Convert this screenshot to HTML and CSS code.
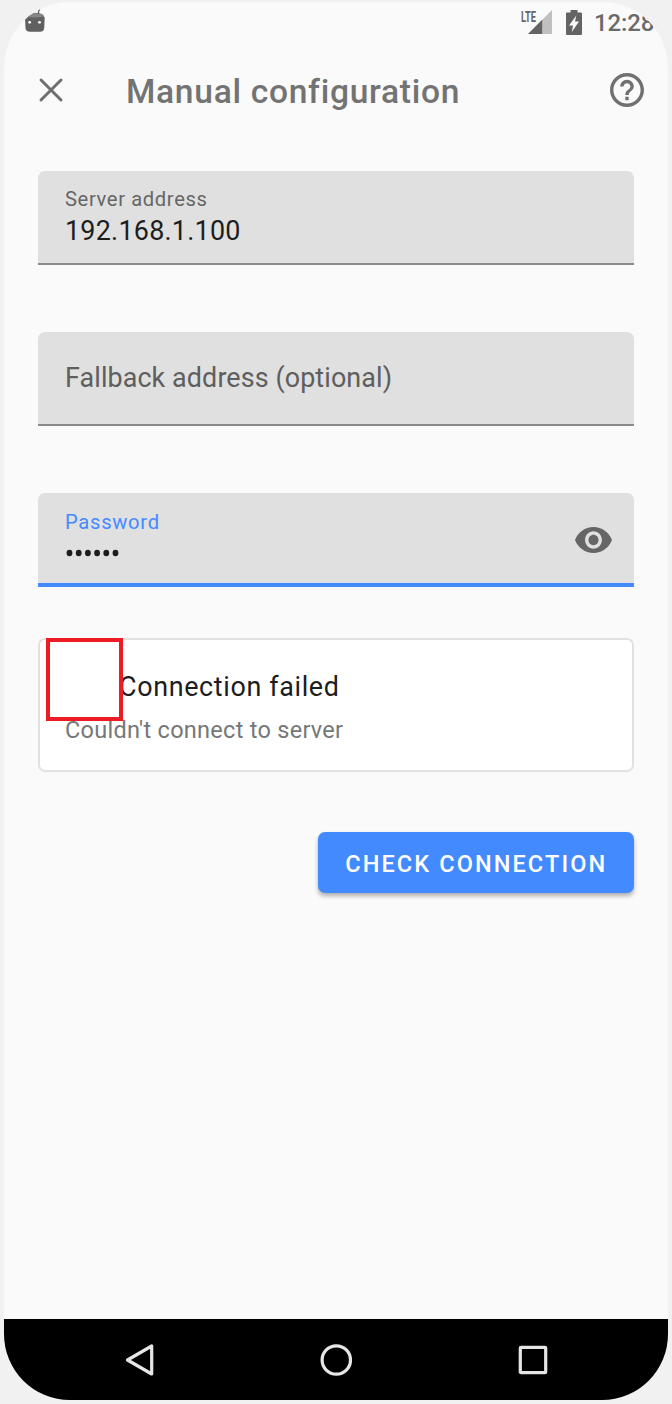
FILE: index.html
```html
<!DOCTYPE html>
<html lang="en">
<head>
<meta charset="utf-8">
<title>Manual configuration</title>
<link rel="stylesheet" href="styles.css">
</head>
<body>
<div class="device">
  <div class="status-bar">
    <svg class="debug-icon" width="22" height="26" viewBox="0 0 22 26">
      <path d="M1 10Q1 8 4 7H17Q20.700 8 20.700 10L20.200 20Q20 23.800 16 23.800H6Q1.800 23.800 1.500 20Z" fill="#606060"/>
      <path d="M1.500 8.500Q3 6.500 7 5.500Q11 4 16 5.300Q19.500 6 20.200 8.200Q11 10.500 1.500 8.500Z" fill="#858585"/>
      <path d="M14.500 6Q14 2.500 16 1.500" fill="none" stroke="#606060" stroke-width="1.300"/>
      <circle cx="5.700" cy="14.300" r="1.400" fill="#fff"/><circle cx="15.500" cy="14.300" r="1.400" fill="#fff"/>
    </svg>
    <div class="signal">
      <span class="lte">LTE</span>
      <svg width="24" height="24" viewBox="0 0 24 24"><path d="M24 0V24H0Z" fill="#c0c0c0"/><path d="M14.200 9.800V24H0Z" fill="#646464"/></svg>
    </div>
    <svg class="battery" width="16" height="25" viewBox="0 0 16 25"><path d="M4.500 0H11.500V2.500H15Q16 2.500 16 3.500V24Q16 25 15 25H1Q0 25 0 24V3.500Q0 2.500 1 2.500H4.500Z" fill="#646464"/><path d="M10.300 5.500L9 11.500H13L5.800 22L7 15.500H3Z" fill="#fafafa"/></svg>
    <span class="clock">12:28</span>
  </div>

  <header class="app-bar">
    <svg class="close" width="26" height="26" viewBox="0 0 26 26"><path d="M3 3L23 23M23 3L3 23" fill="none" stroke="#6e6e6e" stroke-width="3" stroke-linecap="round"/></svg>
    <h1 class="title">Manual configuration</h1>
    <svg class="help" width="34" height="34" viewBox="2 2 20 20"><path fill="#707070" d="M11 18h2v-2h-2v2zm1-16C6.480 2 2 6.480 2 12s4.480 10 10 10 10-4.480 10-10S17.520 2 12 2zm0 18c-4.410 0-8-3.590-8-8s3.590-8 8-8 8 3.590 8 8-3.590 8-8 8zm0-14c-2.210 0-4 1.790-4 4h2c0-1.100.9-2 2-2s2 .9 2 2c0 2-3 1.750-3 5h2c0-2.250 3-2.500 3-5 0-2.210-1.790-4-4-4z"/></svg>
  </header>

  <main class="form">
    <div class="field">
      <span class="label">Server address</span>
      <span class="value">192.168.1.100</span>
    </div>
    <div class="field empty">
      <span class="placeholder">Fallback address (optional)</span>
    </div>
    <div class="field focused">
      <div class="field-text">
        <span class="label">Password</span>
        <svg class="dots" width="56" height="8" viewBox="0 0 56 8" fill="#1d1d1d"><ellipse cx="4.500" cy="4" rx="2.900" ry="3.300"/><ellipse cx="13.700" cy="4" rx="2.900" ry="3.300"/><ellipse cx="22.900" cy="4" rx="2.900" ry="3.300"/><ellipse cx="32.100" cy="4" rx="2.900" ry="3.300"/><ellipse cx="41.300" cy="4" rx="2.900" ry="3.300"/><ellipse cx="50.500" cy="4" rx="2.900" ry="3.300"/></svg>
      </div>
      <svg class="eye" width="37" height="26" viewBox="1 4.500 22 15" preserveAspectRatio="none"><path fill="#666" d="M12 4.500C7 4.500 2.730 7.610 1 12c1.730 4.390 6 7.500 11 7.500s9.270-3.110 11-7.500c-1.730-4.390-6-7.500-11-7.500zM12 17c-2.760 0-5-2.240-5-5s2.240-5 5-5 5 2.240 5 5-2.240 5-5 5zm0-8c-1.660 0-3 1.340-3 3s1.340 3 3 3 3-1.340 3-3-1.340-3-3-3z"/></svg>
    </div>

    <section class="card">
      <h2 class="card-title">Connection failed</h2>
      <p class="card-text">Couldn't connect to server</p>
      <div class="highlight"></div>
    </section>

    <button class="check">CHECK CONNECTION</button>
  </main>

  <nav class="nav-bar">
    <svg width="32" height="36" viewBox="0 0 32 36"><path d="M4.500 18L28.700 4V32Z" fill="none" stroke="#e6e6e6" stroke-width="3.200" stroke-linejoin="round"/></svg>
    <svg width="32" height="36" viewBox="0 0 32 36"><circle cx="16.300" cy="18" r="14.200" fill="none" stroke="#e6e6e6" stroke-width="3.200"/></svg>
    <svg width="32" height="36" viewBox="0 0 32 36"><rect x="3.300" y="5.300" width="25.400" height="25.400" rx=".8" fill="none" stroke="#e6e6e6" stroke-width="3.200"/></svg>
  </nav>
</div>
</body>
</html>
```

FILE: styles.css
```css
* { box-sizing: border-box; }
body {
  margin: 0;
  height: 1404px;
  padding: 2px 4px 4px;
  background: #f1f1f1;
  font-family: Roboto, sans-serif;
  color: #1d1d1d;
}
svg { display: block; flex: none; }
h1, h2, p { margin: 0; }
.device {
  display: flex;
  flex-direction: column;
  height: 1398px;
  border-radius: 66px;
  overflow: hidden;
  background: #fafafa;
}
.status-bar {
  display: flex;
  align-items: flex-start;
  height: 44px;
  padding: 6px 0 0 20px;
}
.signal {
  display: flex;
  align-items: flex-start;
  margin: 2px 0 0 auto;
}
.signal svg { margin-left: -9px; }
.lte {
  font-size: 15.500px;
  line-height: 14px;
  font-weight: 700;
  width: 16px;
  transform: scaleX(.6);
  transform-origin: left;
  color: #646464;
}
.battery { margin: 2px 0 0 14px; }
.clock {
  width: 74px;
  margin-left: 12px;
  font-size: 24px;
  line-height: 30px;
  font-weight: 500;
  letter-spacing: -.1px;
  color: #6a6a6a;
  white-space: nowrap;
}
.app-bar {
  display: flex;
  align-items: center;
  height: 88px;
  padding: 0 24px 0 34px;
}
.title {
  margin: 3px auto 0 62px;
  font-size: 33.600px;
  line-height: 40px;
  font-weight: 500;
  letter-spacing: .7px;
  color: #737373;
}
.form {
  flex: 1;
  display: flex;
  flex-direction: column;
  padding: 37px 34px 0;
}
.field {
  display: flex;
  flex-direction: column;
  height: 93.500px;
  margin-bottom: 67.500px;
  padding: 16px 27px 0;
  border-radius: 7px 7px 0 0;
  border-bottom: 2px solid #8a8a8a;
  background: #e0e0e0;
}
.label {
  font-size: 20.200px;
  line-height: 24px;
  letter-spacing: .62px;
  color: #666;
}
.value {
  font-size: 26.900px;
  line-height: 32px;
  margin-top: 4px;
  letter-spacing: .25px;
}
.empty { padding-top: 30px; }
.placeholder {
  font-size: 26.900px;
  line-height: 32px;
  letter-spacing: .1px;
  color: #5e5e5e;
}
.focused {
  flex-direction: row;
  justify-content: space-between;
  height: 94px;
  margin-bottom: 51px;
  padding: 17px 22px 0 27px;
  border-bottom: 4px solid #448aff;
}
.field-text { display: flex; flex-direction: column; }
.focused .label { color: #448aff; letter-spacing: .7px; }
.dots { margin-top: 14.500px; }
.eye { margin-top: 17px; }
.card {
  position: relative;
  height: 133.500px;
  padding: 31px 25px 0;
  border: 2px solid #e1e1e1;
  border-radius: 7px;
  background: #fff;
}
.card-title {
  padding-left: 54px;
  font-size: 26.900px;
  line-height: 32px;
  font-weight: 400;
  letter-spacing: .65px;
}
.card-text {
  margin-top: 13px;
  font-size: 23.500px;
  line-height: 28px;
  letter-spacing: .28px;
  color: #777;
}
.highlight {
  position: absolute;
  left: 6px;
  top: -2px;
  width: 77px;
  height: 83px;
  border: 4px solid #ed1c24;
}
.check {
  align-self: flex-end;
  width: 316.500px;
  height: 61px;
  margin-top: 60.500px;
  padding: 2px 0 0 1px;
  border: 0;
  border-radius: 7px;
  background: #448aff;
  box-shadow: 0 3px 4px rgba(0, 0, 0, .3);
  color: #fff;
  font: 500 23.500px/28px Roboto, sans-serif;
  letter-spacing: 2.100px;
  white-space: nowrap;
}
.nav-bar {
  display: flex;
  align-items: center;
  justify-content: space-between;
  height: 81px;
  padding: 0 119px;
  background: #000;
}
```
